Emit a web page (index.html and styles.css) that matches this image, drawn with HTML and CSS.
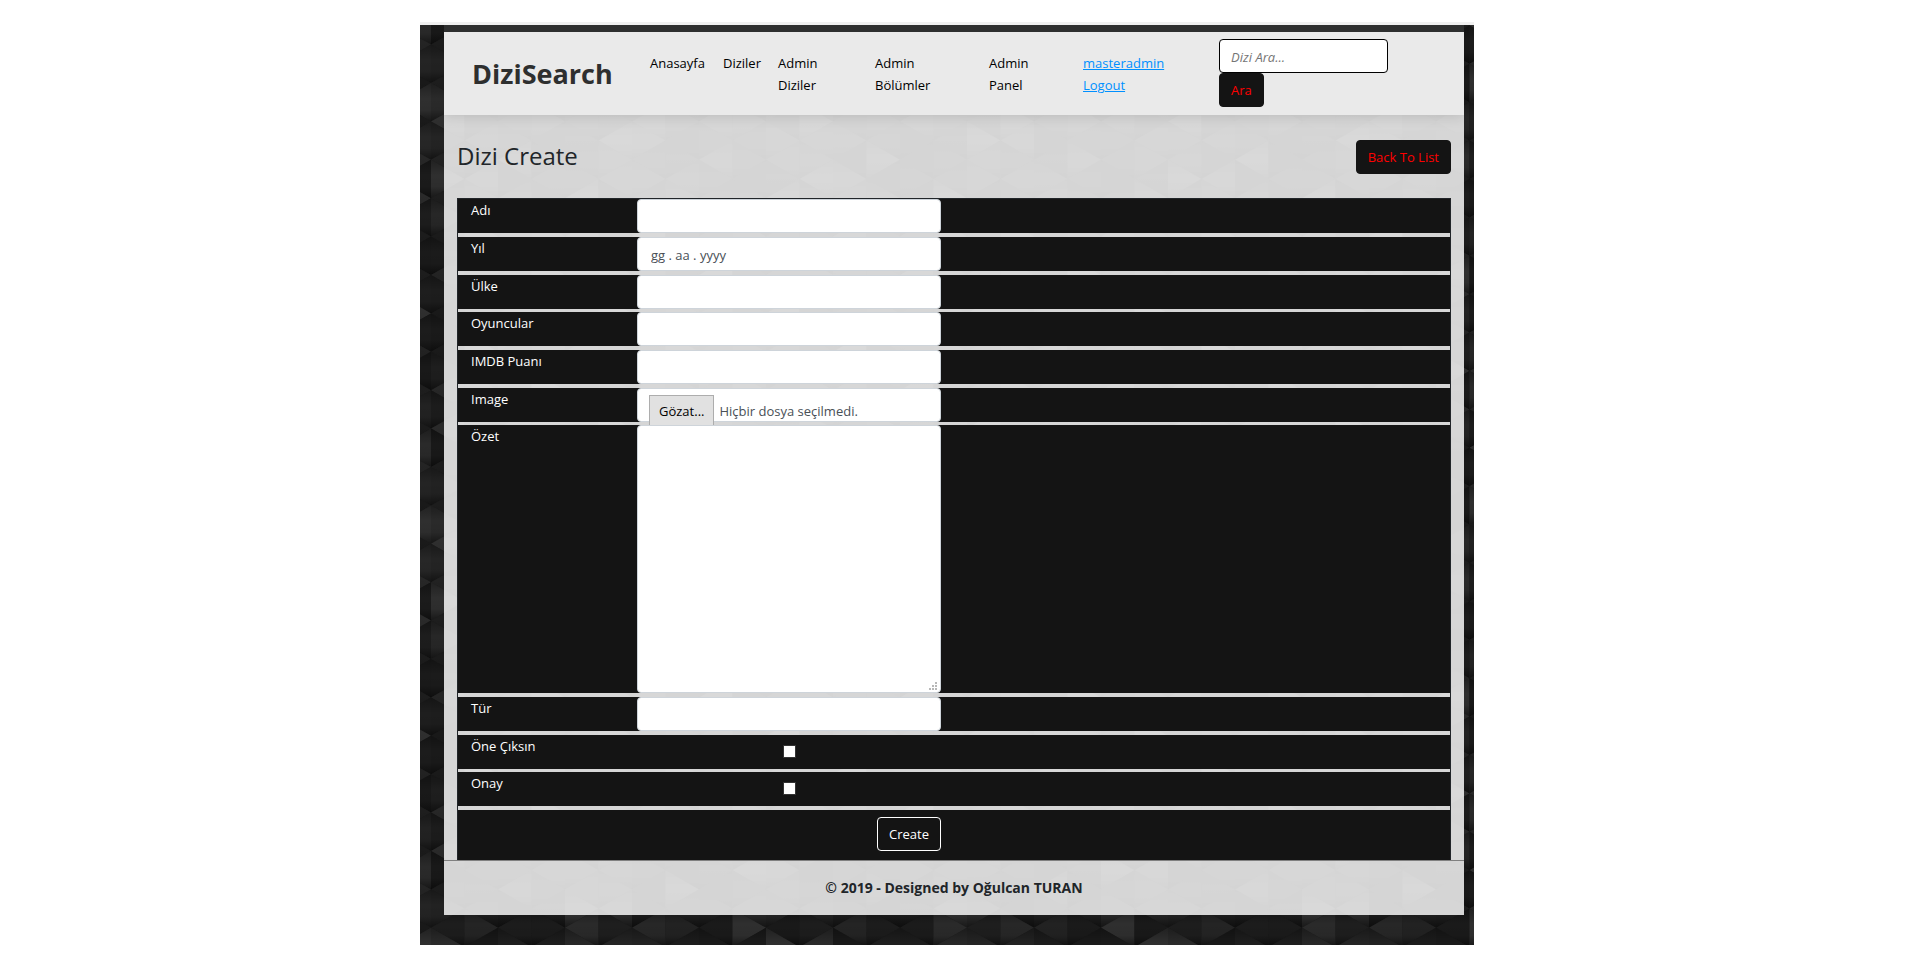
FILE: index.html
```html
<!DOCTYPE html>
<html lang="tr">
<head>
<meta charset="utf-8">
<title>Dizi Create - DiziSearch</title>
<link rel="stylesheet" href="styles.css">
</head>
<body>
<div class="page">
  <svg class="pattern" id="pattern" aria-hidden="true">
    <defs>
      <linearGradient id="shade" x1="0" y1="0" x2="0" y2="1">
        <stop offset="0" stop-color="#000" stop-opacity="0.3"/>
        <stop offset="0.4" stop-color="#000" stop-opacity="0"/>
        <stop offset="0.7" stop-color="#000" stop-opacity="0.05"/>
        <stop offset="1" stop-color="#000" stop-opacity="0.5"/>
      </linearGradient>
    </defs>
  </svg>
  <div class="panel">
    <header class="header">
      <a class="logo" href="#">DiziSearch</a>
      <nav class="nav">
        <a href="#">Anasayfa</a>
        <a href="#">Diziler</a>
        <a href="#">Admin<br>Diziler</a>
        <a href="#">Admin<br>Bölümler</a>
        <a href="#">Admin<br>Panel</a>
        <div class="account"><a href="#">masteradmin</a><a href="#">Logout</a></div>
      </nav>
      <form class="search">
        <input class="search-input" type="text" placeholder="Dizi Ara..." aria-label="Dizi Ara">
        <button class="btn" type="button">Ara</button>
      </form>
    </header>
    <main class="main">
      <div class="title-row">
        <h1 class="title">Dizi Create</h1>
        <a class="btn" href="#">Back To List</a>
      </div>
      <form class="form">
        <div class="row"><label for="adi">Adı</label><input class="field" id="adi" type="text"></div>
        <div class="row"><label for="yil">Yıl</label><input class="field" id="yil" type="text" placeholder="gg . aa . yyyy"></div>
        <div class="row"><label for="ulke">Ülke</label><input class="field" id="ulke" type="text"></div>
        <div class="row"><label for="oyuncular">Oyuncular</label><input class="field" id="oyuncular" type="text"></div>
        <div class="row"><label for="imdb">IMDB Puanı</label><input class="field" id="imdb" type="text"></div>
        <div class="row"><label for="image">Image</label>
          <div class="field file">
            <span class="file-button">Gözat...</span><span class="file-name">Hiçbir dosya seçilmedi.</span>
            <input class="file-input" id="image" type="file">
          </div>
        </div>
        <div class="row"><label for="ozet">Özet</label>
          <div class="area-wrap">
            <textarea class="field area" id="ozet"></textarea>
            <svg class="grip" viewBox="0 0 9 9" aria-hidden="true"><path fill="#b8b8b8" d="M6 0h2v2H6zM3 3h2v2H3zM6 3h2v2H6zM0 6h2v2H0zM3 6h2v2H3zM6 6h2v2H6z"/></svg>
          </div>
        </div>
        <div class="row"><label for="tur">Tür</label><input class="field" id="tur" type="text"></div>
        <div class="row"><label for="one">Öne Çıksın</label><input class="check" id="one" type="checkbox"></div>
        <div class="row"><label for="onay">Onay</label><input class="check" id="onay" type="checkbox"></div>
        <div class="row actions"><button class="btn create" type="button">Create</button></div>
      </form>
    </main>
    <footer class="footer">© 2019 - Designed by Oğulcan TURAN</footer>
  </div>
</div>
<script src="pattern.js"></script>
</body>
</html>
```
FILE: pattern.js
```js
// Tiles the page backdrop with shaded triangles.
const svg = document.getElementById('pattern');
const stepX = 33.5, stepY = 38.4, originX = -22.5, originY = -38;
const box = svg.getBoundingClientRect();
const shades = [27, 34, 29, 42, 26, 36, 30, 47, 28, 39, 25];

function triangle(points, shade) {
  for (const fill of [`rgb(${shade},${shade},${shade})`, 'url(#shade)']) {
    const p = document.createElementNS('http://www.w3.org/2000/svg', 'polygon');
    p.setAttribute('points', points);
    p.setAttribute('fill', fill);
    svg.appendChild(p);
  }
}

for (let i = 0; originX + i * stepX < box.width; i++) {
  const x = originX + i * stepX;
  const near = i % 2 ? stepY / 2 : 0;
  const far = stepY / 2 - near;
  for (let j = -1; originY + j * stepY < box.height; j++) {
    const y = originY + j * stepY;
    const a = shades[(i * 3 + j * 5 + 22) % 11];
    const b = shades[(i * 7 + j * 2 + 25) % 11];
    const x2 = x + stepX;
    if (i % 2 === 0) {
      triangle(`${x},${y} ${x},${y + stepY} ${x2},${y + far}`, a);
      triangle(`${x2},${y + far} ${x2},${y + far + stepY} ${x},${y + stepY}`, b);
    } else {
      triangle(`${x2},${y} ${x2},${y + stepY} ${x},${y + near}`, a);
      triangle(`${x},${y + near} ${x},${y + near + stepY} ${x2},${y + stepY}`, b);
    }
  }
}
```
FILE: styles.css
```css
* {
  box-sizing: border-box;
}

body {
  margin: 0;
  padding: 22px 26px 25px 0;
  background: #fff;
  color: #212529;
  font-family: "Open Sans", "Noto Sans", sans-serif;
  font-size: 13px;
  line-height: 22px;
}

input, textarea, button {
  font: inherit;
}

a {
  color: inherit;
  text-decoration: none;
}

.page {
  position: relative;
  max-width: 1054px;
  margin: 0 auto;
  padding: 3px 10px 30px 24px;
}

.page::before {
  content: "";
  position: absolute;
  inset: 0 0 auto;
  height: 3px;
  background: #f0f0f0;
}

.pattern {
  position: absolute;
  inset: 3px 0 0;
  width: 100%;
  height: calc(100% - 3px);
  background: #181818;
}

.panel {
  position: relative;
  overflow: hidden;
  border-top: 7px solid #2e2f2f;
  background: rgba(247, 247, 247, 0.85);
  background-clip: padding-box;
}

.header {
  display: flex;
  padding: 7px 76px 8px 28px;
  background: #eaeaea;
  box-shadow: 0 2px 12px rgba(0, 0, 0, 0.12);
}

.logo {
  align-self: center;
  padding-top: 2px;
  color: #2e2f2f;
  font-size: 27px;
  font-weight: 700;
  line-height: 34px;
}

.nav {
  display: grid;
  grid-template-columns: 73px 55px 97px 114px 94px 127px;
  margin: 0 9px 0 auto;
  padding-top: 13px;
  color: #000;
}

.account {
  display: flex;
  flex-direction: column;
  align-items: flex-start;
  color: #0090ff;
}

.account a {
  text-decoration: underline;
}

.search {
  display: flex;
  flex-direction: column;
  align-items: flex-start;
  width: 169px;
}

.search-input {
  width: 100%;
  height: 34px;
  padding: 6px 11px 4px;
  border: 1px solid #000;
  border-radius: 4px;
  background: #fff;
}

.search-input::placeholder {
  color: #757575;
  font-style: italic;
}

.btn {
  padding: 5px 11px;
  border: 1px solid #141414;
  border-radius: 4px;
  background: #141414;
  color: #f00;
  line-height: 22px;
}

.main {
  padding: 25px 13px 0;
}

.title-row {
  display: flex;
  justify-content: space-between;
  align-items: center;
  margin-bottom: 24px;
}

.title {
  margin: 0;
  padding-bottom: 2px;
  font-size: 24px;
  font-weight: 400;
  line-height: 30px;
}

.form {
  border: 1px solid #212529;
  border-bottom: 0;
}

.row {
  display: grid;
  grid-template-columns: 179px 304px 1fr;
  margin-bottom: 4px;
  background: #141414;
  color: #fff;
}

.row:nth-child(3n) {
  margin-bottom: 3px;
}

.row label {
  padding-left: 13px;
}

.field {
  position: relative;
  display: block;
  width: 100%;
  height: 34px;
  padding: 7px 13px 5px;
  border: 1px solid #ced4da;
  border-radius: 4px;
  background: #fff;
  color: #495057;
}

.field::placeholder {
  color: #495057;
  opacity: 1;
}

.file {
  display: flex;
  gap: 5px;
  padding: 6px 11px 0;
}

.file-button {
  flex: none;
  height: 30px;
  padding: 4px 9px 0;
  border: 1px solid #adadad;
  border-bottom: 0;
  background: #e1e1e1;
  color: #000;
}

.file-name {
  padding-top: 5px;
}

.file-input {
  position: absolute;
  inset: 0;
  width: 100%;
  opacity: 0;
}

.area-wrap {
  position: relative;
}

.area {
  height: 268px;
  resize: none;
}

.grip {
  position: absolute;
  right: 3px;
  bottom: 2px;
  width: 9px;
  height: 9px;
}

.check {
  appearance: none;
  justify-self: center;
  width: 13px;
  height: 13px;
  margin: 10px 0 11px;
  border: 1px solid #333;
  background: #fff;
}

.actions {
  margin-bottom: 0;
  padding: 7px 0 9px;
}

.create {
  grid-column: 2;
  justify-self: end;
  border-color: #fff;
  color: #fff;
}

.footer {
  padding: 16px;
  border-top: 1px solid #808080;
  font-size: 14px;
  font-weight: 700;
  text-align: center;
}
```
